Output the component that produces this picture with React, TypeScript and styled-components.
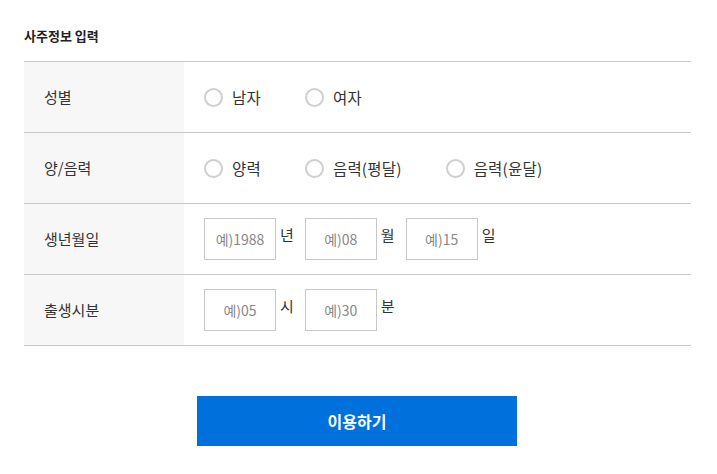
import React from 'react';
import styled, { createGlobalStyle } from 'styled-components';

const GlobalStyle = createGlobalStyle`
  body {
    margin: 0;
    background: #fff;
    font-family: 'Noto Sans CJK KR', 'Noto Sans', sans-serif;
    color: #333;
  }
`;

type Row = {
  label: string;
  kind: 'radio' | 'input';
  options?: string[];
  fields?: { placeholder: string; unit: string }[];
};

const rows: Row[] = [
  { label: '성별', kind: 'radio', options: ['남자', '여자'] },
  { label: '양/음력', kind: 'radio', options: ['양력', '음력(평달)', '음력(윤달)'] },
  {
    label: '생년월일',
    kind: 'input',
    fields: [
      { placeholder: '예)1988', unit: '년' },
      { placeholder: '예)08', unit: '월' },
      { placeholder: '예)15', unit: '일' },
    ],
  },
  {
    label: '출생시분',
    kind: 'input',
    fields: [
      { placeholder: '예)05', unit: '시' },
      { placeholder: '예)30', unit: '분' },
    ],
  },
];

export default function App(): React.ReactElement {
  return (
    <>
      <GlobalStyle />
      <Wrapper>
        <Title>사주정보 입력</Title>
        <Table>
          {rows.map((row) => (
            <TableRow key={row.label}>
              <Label>{row.label}</Label>
              <Cell>
                {row.kind === 'radio' &&
                  row.options?.map((opt) => (
                    <RadioOption key={opt}>
                      <RadioCircle />
                      {opt}
                    </RadioOption>
                  ))}
                {row.kind === 'input' &&
                  row.fields?.map((f) => (
                    <Field key={f.unit}>
                      <NumberInput placeholder={f.placeholder} />
                      <Unit>{f.unit}</Unit>
                    </Field>
                  ))}
              </Cell>
            </TableRow>
          ))}
        </Table>
        <ButtonArea>
          <SubmitButton>이용하기</SubmitButton>
        </ButtonArea>
      </Wrapper>
    </>
  );
}

const Wrapper = styled.div`
  padding: 25px 26px 0 24px;
`;

const Title = styled.h2`
  margin: 0 0 15px;
  font-size: 13px;
  font-weight: 700;
  line-height: 21px;
  color: #222;
`;

const Table = styled.div`
  border-top: 1px solid #c8c8c8;
`;

const TableRow = styled.div`
  display: flex;
  height: 70px;
  border-bottom: 1px solid #c8c8c8;
`;

const Label = styled.div`
  width: 160px;
  flex-shrink: 0;
  box-sizing: border-box;
  padding-left: 20px;
  padding-bottom: 2px;
  display: flex;
  align-items: center;
  background: #f7f7f7;
  font-size: 15px;
  color: #333;
`;

const Cell = styled.div`
  flex: 1;
  display: flex;
  align-items: center;
  padding-left: 20px;
`;

const RadioOption = styled.label`
  display: flex;
  align-items: center;
  margin-right: 44px;
  font-size: 15.5px;
  letter-spacing: 0.2px;
  color: #333;
`;

const RadioCircle = styled.span`
  width: 19px;
  height: 19px;
  box-sizing: border-box;
  border: 2px solid #cfcfcf;
  border-radius: 50%;
  margin-right: 9px;
`;

const Field = styled.div`
  display: flex;
  align-items: center;
  margin-right: 11px;
`;

const NumberInput = styled.input`
  width: 72px;
  height: 42px;
  box-sizing: border-box;
  border: 1px solid #c8c8c8;
  padding: 0;
  text-align: center;
  font-family: 'Noto Sans CJK KR', 'Noto Sans', sans-serif;
  font-size: 14px;
  outline: none;
  &::placeholder {
    color: #888;
  }
`;

const Unit = styled.span`
  margin-left: 4px;
  font-size: 15px;
  color: #333;
  align-self: flex-start;
  margin-top: 6px;
`;

const ButtonArea = styled.div`
  display: flex;
  justify-content: center;
  padding-top: 50px;
  padding-right: 1px;
`;

const SubmitButton = styled.button`
  width: 320px;
  height: 50px;
  border: 0;
  background: #0070dc;
  color: #fff;
  font-family: 'Noto Sans CJK KR', 'Noto Sans', sans-serif;
  font-size: 16px;
  font-weight: 700;
  cursor: pointer;
`;
